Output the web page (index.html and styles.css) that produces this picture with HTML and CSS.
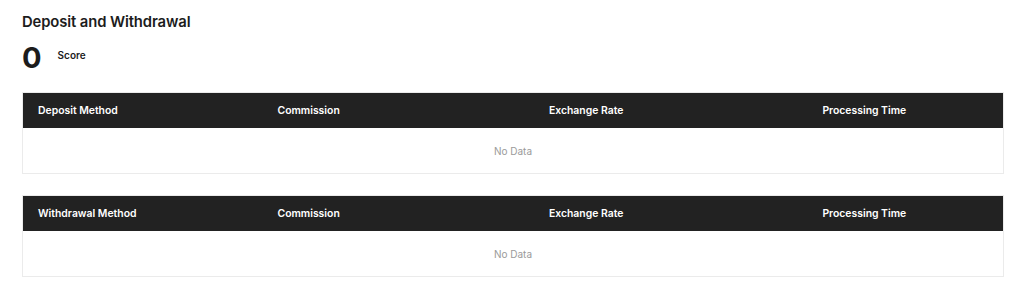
FILE: index.html
```html
<!DOCTYPE html>
<html lang="en">
<head>
<meta charset="utf-8">
<title>Deposit and Withdrawal</title>
<link rel="stylesheet" href="styles.css">
</head>
<body>
<section class="panel">
  <h2 class="panel-title">Deposit and Withdrawal</h2>
  <div class="score">
    <span class="score-value">0</span>
    <span class="score-label">Score</span>
  </div>

  <div class="table">
    <div class="table-head">
      <div class="cell">Deposit Method</div>
      <div class="cell">Commission</div>
      <div class="cell">Exchange Rate</div>
      <div class="cell">Processing Time</div>
    </div>
    <div class="table-empty">No Data</div>
  </div>

  <div class="table">
    <div class="table-head">
      <div class="cell">Withdrawal Method</div>
      <div class="cell">Commission</div>
      <div class="cell">Exchange Rate</div>
      <div class="cell">Processing Time</div>
    </div>
    <div class="table-empty">No Data</div>
  </div>
</section>
</body>
</html>
```

FILE: styles.css
```css
* {
  box-sizing: border-box;
}

html, body {
  margin: 0;
  background: #ffffff;
}

body {
  font-family: Inter, "Noto Sans", sans-serif;
  color: #1c1c1c;
}

.panel {
  padding: 12px 20px 0 22px;
}

.panel-title {
  margin: 0;
  font-size: 14.8px;
  font-weight: 600;
  line-height: 20px;
  letter-spacing: -0.1px;
}

.score {
  display: flex;
  align-items: center;
  gap: 16px;
  margin-top: 11px;
  height: 30px;
}

.score-value {
  font-size: 29px;
  font-weight: 700;
  line-height: 30px;
}

.score-label {
  font-size: 10px;
  font-weight: 600;
  margin-top: -6px;
}

.table {
  margin-top: 19px;
  border: 1px solid #ebebeb;
}

.table + .table {
  margin-top: 21px;
}

.table-head {
  display: grid;
  grid-template-columns: 240fr 272fr 274fr 196fr;
  background: #222222;
  height: 35px;
  align-items: center;
}

.cell {
  padding-left: 15px;
  color: #ffffff;
  font-size: 10.4px;
  font-weight: 600;
}

.table-empty {
  height: 45px;
  display: flex;
  align-items: center;
  justify-content: center;
  font-size: 10px;
  color: #9a9a9a;
}
```
